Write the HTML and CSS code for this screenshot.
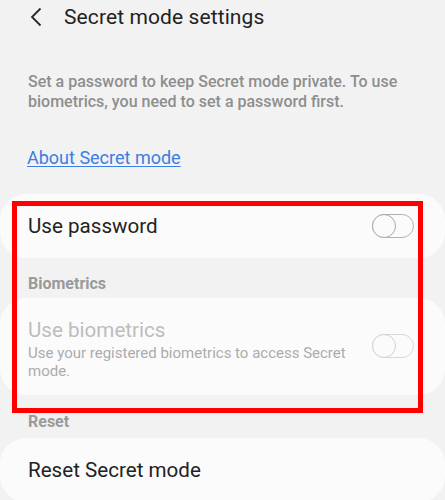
FILE: index.html
```html
<!DOCTYPE html>
<html>
<head>
<meta charset="utf-8">
<link rel="stylesheet" href="styles.css">
</head>
<body>
<div class="page">
  <header class="topbar">
    <svg class="back" width="14" height="20" viewBox="0 0 14 20"><path d="M11.5 1.5 L3 10 L11.5 18.5" fill="none" stroke="#2a2a2a" stroke-width="1.8"/></svg>
    <h1 class="title">Secret mode settings</h1>
  </header>
  <p class="desc">Set a password to keep Secret mode private. To use biometrics, you need to set a password first.</p>
  <a class="link" href="#">About Secret mode</a>

  <div class="highlighted">
    <div class="card card-first">
      <span class="label">Use password</span>
      <span class="toggle"><span class="thumb"></span></span>
    </div>
    <div class="section">Biometrics</div>
    <div class="card card-bio">
      <div class="bio-text">
        <div class="label disabled">Use biometrics</div>
        <div class="sub">Use your registered biometrics to access Secret mode.</div>
      </div>
      <span class="toggle off-disabled"><span class="thumb"></span></span>
    </div>
    <div class="redbox"></div>
  </div>
  <div class="section section-reset">Reset</div>
  <div class="card card-reset">
    <span class="label">Reset Secret mode</span>
  </div>
</div>
</body>
</html>
```
FILE: styles.css
```css
html, body {
  margin: 0;
  padding: 0;
  background: #f2f2f2;
  font-family: Roboto, "Liberation Sans", sans-serif;
  overflow: hidden;
}
.page {
  width: 445px;
  height: 500px;
  overflow: hidden;
}
.topbar {
  display: flex;
  align-items: center;
  height: 34px;
  padding-left: 29px;
}
.back {
  display: block;
}
.title {
  margin: 0 0 0 21px;
  font-size: 21px;
  font-weight: 400;
  color: #222;
  letter-spacing: 0.1px;
}
.desc {
  margin: 38px 28px 0 28px;
  font-size: 16px;
  line-height: 19.5px;
  font-weight: 500;
  color: #8e8e8e;
}
.link {
  display: inline-block;
  margin: 36px 0 0 27px;
  font-size: 18px;
  color: #3b7ee4;
  text-decoration: underline;
  text-underline-offset: 2px;
  text-decoration-thickness: 1px;
}
.highlighted {
  position: relative;
  margin-top: 26px;
}
.card {
  background: #fbfbfb;
  border-radius: 26px;
  display: flex;
  align-items: center;
  justify-content: space-between;
  padding: 0 31px 0 28px;
}
.card-first {
  height: 64px;
}
.label {
  font-size: 20.6px;
  color: #222;
}
.label.disabled {
  color: #bdbdbd;
}
.section {
  height: 40px;
  display: flex;
  align-items: center;
  padding-left: 28px;
  font-size: 16px;
  font-weight: 700;
  color: #9a9a9a;
  padding-top: 11px;
  box-sizing: border-box;
}
.card-bio {
  height: 97px;
  align-items: flex-start;
  padding-top: 20px;
  box-sizing: border-box;
}
.bio-text {
  width: 330px;
}
.sub {
  margin-top: 2px;
  font-size: 15px;
  line-height: 18px;
  color: #acacac;
}
.card-bio .toggle {
  margin-top: 16px;
}
.toggle {
  position: relative;
  width: 40px;
  height: 22px;
  border: 1.3px solid #b0b0b0;
  border-radius: 12px;
  flex-shrink: 0;
}
.thumb {
  position: absolute;
  left: -1.3px;
  top: -1.3px;
  width: 22px;
  height: 22px;
  border: 1.3px solid #a8a8a8;
  border-radius: 50%;
  background: #fbfbfb;
}
.off-disabled {
  border-color: #d8d8d8;
}
.off-disabled .thumb {
  border-color: #d2d2d2;
}
.section-reset {
  height: 43px;
  padding-top: 10px;
}
.card-reset {
  height: 64px;
}
.redbox {
  position: absolute;
  left: 12px;
  top: 7px;
  width: 411px;
  height: 212px;
  border: 5.5px solid #ff0000;
  box-sizing: border-box;
  pointer-events: none;
}
```
